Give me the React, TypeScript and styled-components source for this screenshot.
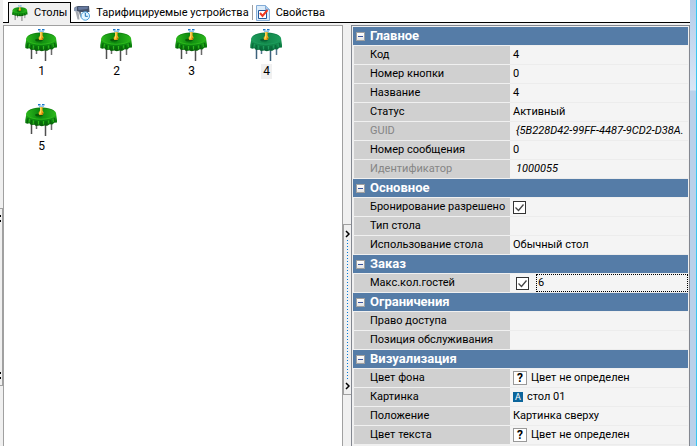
import React, { useState } from "react";
import styled, { createGlobalStyle } from "styled-components";

const GlobalStyle = createGlobalStyle`
  * { box-sizing: border-box; }
  body {
    margin: 0;
    overflow: hidden;
    background: #f0f0f0;
    color: #000;
    font: 11px/18px Roboto, "Liberation Sans", sans-serif;
  }
  button, input { font: inherit; color: inherit; }
`;

const Screen = styled.div`
  display: grid;
  grid-template-columns: 3px minmax(0, 1fr) 7px;
  height: 100vh;
  overflow: hidden;
`;

const LeftEdge = styled.div`
  padding-top: 208px;
`;

const LeftHandle = styled.div`
  display: flex;
  flex-direction: column;
  justify-content: space-between;
  height: 178px;
  padding: 6px 0;
  border: solid #a0a0a0;
  border-width: 1px 1px 1px 0;
`;

const HandleMark = styled.span`
  width: 1px;
  height: 7px;
  border: solid #000;
  border-width: 2px 0;
`;

const RightEdge = styled.div`
  border-right: 1px solid #38c6f0;
  background: linear-gradient(#b4cdea 0, #d9e6f5 90px, #b9d1ea 91px);
`;

const Main = styled.main`
  display: flex;
  flex-direction: column;
  min-width: 0;
`;

const TabBar = styled.div`
  display: flex;
  align-items: flex-end;
  height: 23px;
  padding-left: 5px;
  background: #fff;
  box-shadow: inset 0 -1px #000;
`;

const Tab = styled.button<{ $active?: boolean }>`
  display: flex;
  align-items: center;
  gap: 6px;
  height: ${(p) => (p.$active ? 21 : 20)}px;
  padding: 0 3px;
  border: ${(p) => (p.$active ? "1px solid #000" : "0")};
  border-bottom: 0;
  background: ${(p) => (p.$active ? "#f0f0f0" : "transparent")};
  white-space: nowrap;
`;

const TabSeparator = styled.span`
  width: 1px;
  height: 15px;
  margin-bottom: 3px;
  background: #a0a0a0;
`;

const Panes = styled.div`
  display: grid;
  grid-template-columns: minmax(0, 340fr) 8px minmax(0, 339fr);
  flex: 1;
  min-height: 0;
  padding-top: 2px;
`;

const IconPane = styled.div`
  display: grid;
  grid-template-columns: repeat(auto-fill, 75px);
  grid-auto-rows: 75px;
  align-content: start;
  border: solid #a0a0a0;
  border-width: 1px 1px 0;
  background: #fff;
`;

const Item = styled.button`
  display: flex;
  flex-direction: column;
  align-items: center;
  gap: 3px;
  padding: 2px 0 0;
  border: 0;
  background: transparent;
`;

const ItemLabel = styled.span<{ $selected?: boolean }>`
  padding: 0 2px;
  background: ${(p) => (p.$selected ? "#f0f0f0" : "transparent")};
  font-size: 12px;
  line-height: 15px;
`;

const Splitter = styled.div`
  padding-top: 199px;
`;

const SplitHandle = styled.div`
  display: flex;
  flex-direction: column;
  align-items: center;
  height: 171px;
  padding: 5px 0 4px;
  border: 1px solid #a0a0a0;
  border-right: 0;
`;

const DottedLine = styled.span`
  flex: 1;
  width: 1px;
  margin: 2px 0;
  background: repeating-linear-gradient(#0078d7 0 1px, transparent 1px 3px);
`;

const GridPane = styled.div`
  min-width: 0;
  padding: 1px;
  border: solid #838790;
  border-width: 1px 1px 0;
  overflow: hidden;
`;

const PropertyTable = styled.table`
  width: 100%;
  table-layout: fixed;
  border-collapse: separate;
  border-spacing: 0;
`;

const LabelColumn = styled.col`
  width: 157px;
`;

const SectionCell = styled.th`
  height: 19px;
  padding: 0 0 0 3px;
  border-bottom: 1px solid #f0f0f0;
  background: #557ca7;
  color: #fff;
  font-size: 13px;
  text-align: left;
`;

const SectionTitle = styled.div`
  display: flex;
  align-items: center;
  gap: 5px;
  height: 18px;
`;

const Toggle = styled.button`
  display: flex;
  align-items: center;
  justify-content: center;
  width: 9px;
  height: 9px;
  padding: 0;
  border: 1px solid #a0a0a0;
  background: linear-gradient(#fff, #e4e4e4);
`;

const ToggleBar = styled.span`
  width: 5px;
  height: 1px;
  background: #3a559f;
`;

const NameCell = styled.th<{ $muted?: boolean }>`
  height: 19px;
  padding: 0 0 0 16px;
  border: solid #f0f0f0;
  border-width: 0 0 1px 1px;
  background: #d0d0d0;
  color: ${(p) => (p.$muted ? "#858585" : "#000")};
  font-weight: 400;
  text-align: left;
  white-space: nowrap;
`;

const ValueCell = styled.td`
  height: 19px;
  padding: 0;
  border-bottom: 1px solid #ececec;
  background: #f4f4f4;
`;

const Value = styled.div<{ $italic?: boolean }>`
  display: flex;
  align-items: center;
  gap: 4px;
  height: 18px;
  padding-left: ${(p) => (p.$italic ? 6 : 3)}px;
  font-style: ${(p) => (p.$italic ? "italic" : "normal")};
  white-space: nowrap;
  overflow: hidden;
`;

const EditValue = styled(Value)`
  gap: 7px;
  padding-left: 6px;
`;

const Check = styled.input`
  appearance: none;
  width: 13px;
  height: 13px;
  margin: 0;
  border: 1px solid #333;
  background: #fff;
`;

const CheckWrap = styled.label`
  display: grid;
  flex: none;
  > * { grid-area: 1 / 1; }
  > svg { pointer-events: none; z-index: 1; }
`;

const GuestInput = styled.input`
  flex: 1;
  min-width: 0;
  height: 18px;
  padding: 0 1px;
  border: 1px dotted #000;
  outline: 0;
  background: transparent;
`;

const Unknown = styled.span`
  display: grid;
  place-items: center;
  width: 14px;
  height: 14px;
  border: 1px solid #999;
  background: #fff;
  font-size: 12px;
  font-weight: 700;
  line-height: 12px;
`;

const PictureBadge = styled.span`
  display: grid;
  place-items: center;
  width: 10px;
  height: 10px;
  background: #0c659b;
  color: #fff;
  font-size: 9px;
  line-height: 10px;
`;

function TableIcon({ size, id, tinted }: { size: number; id: string; tinted?: boolean }) {
  const dark = tinted ? "#076338" : "#075d08";
  const mid = tinted ? "#108447" : "#0b860e";
  const light = tinted ? "#1d9c5c" : "#2cb81c";
  const leg = tinted ? "#3c617c" : "#505050";
  const backLeg = tinted ? "#54768f" : "#6c6c6c";
  return (
    <svg width={size} height={size} viewBox="0 0 33 33" aria-hidden="true">
      <defs>
        <linearGradient id={`${id}-top`} x1="0" x2="1" y1="0" y2="0">
          <stop offset="0" stopColor={light} />
          <stop offset=".45" stopColor={mid} />
          <stop offset="1" stopColor={light} />
        </linearGradient>
        <linearGradient id={`${id}-skirt`} x1="0" x2="0" y1="0" y2="1">
          <stop offset="0" stopColor={light} />
          <stop offset=".55" stopColor={mid} />
          <stop offset="1" stopColor={dark} />
        </linearGradient>
      </defs>
      <path d="M11.500 20v6M26.500 19v8" stroke={backLeg} strokeWidth="1.500" />
      <path d="M6.500 20v11M20.500 21v12" stroke={leg} strokeWidth="1.500" />
      <path d="M1.500 10 .300 17v3l2 .7 2-.4 2 1.700 3-.3 2 1.300 3-.5 2.500.7 3-.7 2.500.2 2.500-1.500 2.500.2 2-1.600 2.700-.3V17L31 10Z" fill={`url(#${id}-skirt)`} />
      <path d="m3 15-.7 5M6.500 17 6 21.500M11 18l-.3 4.500M16 18v5M21 18l.3 4.500M25.500 17l.5 4M29.500 15l.5 4" stroke={dark} strokeWidth="1" opacity=".8" />
      <path d="M4.500 16 4 19.500M8.500 17.500l-.3 3.500M13.500 18v3.500M18.500 18v3.500M23.500 17.500l.3 3M28 16l.4 3" stroke={light} strokeWidth="1" />
      <ellipse cx="16.200" cy="10.500" rx="14.800" ry="6" fill={`url(#${id}-top)`} />
      <path d="M1.500 11.500c3 6.300 26 6.300 29.500 0" fill="none" stroke={light} strokeWidth="1" />
      <path d="M3.500 8C9 3.800 23.500 3.800 29 8" fill="none" stroke={dark} strokeWidth=".6" opacity=".6" />
      <ellipse cx="14" cy="12" rx="3.800" ry="1.500" fill={dark} />
      <path d="M15 4h2.600v3.500l1 2-.8 2.500h-3.600l-.7-2 1.500-2.500Z" fill="#efa91b" />
      <path d="M15.800 4v4l-1 3" stroke="#ffe676" fill="none" strokeWidth="1" />
      <path d="M18 9.500 17 12" stroke="#b06d0a" fill="none" strokeWidth="1" />
      <path d="M13 1h2.500v1.500H13ZM17 1h2.500v1.500H17Z" fill="#1976c8" />
      <path d="M14 2.500h5V4h-5Z" fill="#8fc4ec" />
    </svg>
  );
}

function TariffIcon() {
  return (
    <svg width="16" height="16" viewBox="0 0 16 16" aria-hidden="true">
      <path d="m1 2 3-1h11l.5 6L6 7 1 6Z" fill="#46536a" />
      <path d="m4 2 10-.5-.5 2.500-9 1Z" fill="#66799f" />
      <path d="m0 2.500 3-.5v4.500L0 6Z" fill="#8b9ab3" />
      <path d="M1.500 6.500h3l1 8h-2Z" fill="#a6aab1" />
      <path d="M5 7h2l-.5 6Z" fill="#6a7380" />
      <circle cx="11.300" cy="11" r="4.200" fill="#e5f6ff" stroke="#4a9fdc" />
      <path d="M11.300 8v3.300h2.500" fill="none" stroke="#1a70b5" />
    </svg>
  );
}

function PropertiesIcon() {
  return (
    <svg width="14" height="16" viewBox="0 0 14 16" aria-hidden="true">
      <path d="M.5.500h9l4 4v11H.500Z" fill="#dcecfa" stroke="#84acd6" />
      <path d="M9.500.500v4h4" fill="#a9cbec" stroke="#84acd6" />
      <path d="M2.500 5.500h8v8h-8Z" fill="#fff" stroke="#235a9d" />
      <path d="m4 8 2.500 3 5-6" fill="none" stroke="#ee3a20" strokeWidth="2" />
    </svg>
  );
}

function Chevron() {
  return (
    <svg width="5" height="8" viewBox="0 0 5 8" aria-hidden="true">
      <path d="m1 1 3 3-3 3" fill="none" stroke="#000" strokeWidth="1.500" />
    </svg>
  );
}

function CheckBox({ id, label }: { id: string; label?: string }) {
  const [checked, setChecked] = useState(true);
  return (
    <CheckWrap htmlFor={id}>
      <Check id={id} type="checkbox" aria-label={label} checked={checked} onChange={() => setChecked(!checked)} />
      {checked && (
        <svg width="13" height="13" viewBox="0 0 13 13" aria-hidden="true">
          <path d="m2.500 6.500 3 3 5-6" fill="none" stroke="#444" strokeWidth="1.300" />
        </svg>
      )}
    </CheckWrap>
  );
}

type Property = { name: string; value?: string; kind?: "italic" | "check" | "guests" | "color" | "picture" };
type Section = { title: string; rows: Property[] };

const sections: Section[] = [
  {
    title: "Главное",
    rows: [
      { name: "Код", value: "4" },
      { name: "Номер кнопки", value: "0" },
      { name: "Название", value: "4" },
      { name: "Статус", value: "Активный" },
      { name: "GUID", value: "{5B228D42-99FF-4487-9CD2-D38A.", kind: "italic" },
      { name: "Номер сообщения", value: "0" },
      { name: "Идентификатор", value: "1000055", kind: "italic" },
    ],
  },
  {
    title: "Основное",
    rows: [
      { name: "Бронирование разрешено", kind: "check" },
      { name: "Тип стола" },
      { name: "Использование стола", value: "Обычный стол" },
    ],
  },
  { title: "Заказ", rows: [{ name: "Макс.кол.гостей", value: "6", kind: "guests" }] },
  { title: "Ограничения", rows: [{ name: "Право доступа" }, { name: "Позиция обслуживания" }] },
  {
    title: "Визуализация",
    rows: [
      { name: "Цвет фона", value: "Цвет не определен", kind: "color" },
      { name: "Картинка", value: "стол 01", kind: "picture" },
      { name: "Положение", value: "Картинка сверху" },
      { name: "Цвет текста", value: "Цвет не определен", kind: "color" },
    ],
  },
];

function PropertyValue({ row }: { row: Property }) {
  if (row.kind === "check") return <Value><CheckBox id="booking" /></Value>;
  if (row.kind === "guests")
    return (
      <EditValue>
        <CheckBox id="guests-enabled" label={row.name} />
        <GuestInput id="guests" defaultValue={row.value} />
      </EditValue>
    );
  return (
    <Value $italic={row.kind === "italic"}>
      {row.kind === "color" && <Unknown>?</Unknown>}
      {row.kind === "picture" && <PictureBadge>A</PictureBadge>}
      {row.value}
    </Value>
  );
}

const controlIds: Record<string, string> = { check: "booking", guests: "guests" };

export default function App() {
  const [selected, setSelected] = useState(4);
  return (
    <>
      <GlobalStyle />
      <Screen>
        <LeftEdge>
          <LeftHandle><HandleMark /><HandleMark /></LeftHandle>
        </LeftEdge>
        <Main>
          <TabBar role="tablist">
            <Tab role="tab" aria-selected $active><TableIcon size={16} id="cloth-tab" />Столы</Tab>
            <Tab role="tab"><TariffIcon />Тарифицируемые устройства</Tab>
            <TabSeparator />
            <Tab role="tab"><PropertiesIcon />Свойства</Tab>
          </TabBar>
          <Panes>
            <IconPane>
              {[1, 2, 3, 4, 5].map((n) => (
                <Item key={n} onClick={() => setSelected(n)}>
                  <TableIcon size={33} id={`cloth-${n}`} tinted={n === selected} />
                  <ItemLabel $selected={n === selected}>{n}</ItemLabel>
                </Item>
              ))}
            </IconPane>
            <Splitter>
              <SplitHandle><Chevron /><DottedLine /><Chevron /></SplitHandle>
            </Splitter>
            <GridPane>
              <PropertyTable>
                <colgroup><LabelColumn /><col /></colgroup>
                {sections.map((section) => (
                  <tbody key={section.title}>
                    <tr>
                      <SectionCell colSpan={2}>
                        <SectionTitle>
                          <Toggle aria-label={`Свернуть: ${section.title}`}><ToggleBar /></Toggle>
                          {section.title}
                        </SectionTitle>
                      </SectionCell>
                    </tr>
                    {section.rows.map((row) => (
                      <tr key={row.name}>
                        <NameCell scope="row" $muted={row.kind === "italic"}>
                          {row.kind && controlIds[row.kind]
                            ? <label htmlFor={controlIds[row.kind]}>{row.name}</label>
                            : row.name}
                        </NameCell>
                        <ValueCell><PropertyValue row={row} /></ValueCell>
                      </tr>
                    ))}
                  </tbody>
                ))}
              </PropertyTable>
            </GridPane>
          </Panes>
        </Main>
        <RightEdge />
      </Screen>
    </>
  );
}
